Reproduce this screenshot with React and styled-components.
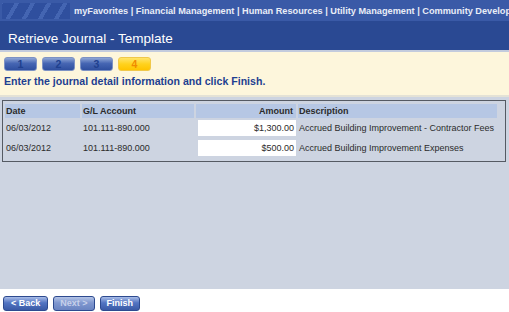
import React from 'react'
import styled, { createGlobalStyle } from 'styled-components'

const Global = createGlobalStyle`
    html, body { margin: 0; padding: 0; }
    body {
        font-family: "Liberation Sans", Arial, sans-serif;
        background: #ffffff;
        overflow: hidden;
    }
`

const Page = styled.div`
    width: 509px;
    height: 312px;
    display: flex;
    flex-direction: column;
`

const TopBar = styled.div`
    height: 21px;
    flex: 0 0 21px;
    background: #3a5aa7;
    display: flex;
    align-items: center;
    white-space: nowrap;
    overflow: hidden;
`

const Stripes = styled.div`
    flex: 0 0 68px;
    height: 16px;
    margin: 0 4px 0 2px;
    background: repeating-linear-gradient(
        -60deg,
        #2f4f9e 0px,
        #2f4f9e 10px,
        #4465b2 10px,
        #4465b2 14px
    );
`

const Menu = styled.div`
    color: #e9edf7;
    font-size: 9.2px;
    font-weight: bold;
`

const Header = styled.div`
    height: 31px;
    flex: 0 0 31px;
    background: #2a4993;
    border-bottom: 2px solid #c3cbdd;
    display: flex;
    align-items: flex-end;
    padding: 0 8px 4px;
    box-sizing: border-box;
    color: #ffffff;
    font-size: 13.5px;
`

const Band = styled.div`
    background: #fdf6dc;
    height: 45px;
    flex: 0 0 45px;
    padding: 5px 4px 0;
    box-sizing: border-box;
    border-bottom: 2px solid #e4e2d6;
`

const Steps = styled.div`
    display: flex;
    gap: 5px;
`

const Step = styled.div`
    width: 31px;
    height: 12px;
    border-radius: 3px;
    font-size: 10.5px;
    font-weight: bold;
    line-height: 13px;
    text-align: center;
    color: ${p => (p.$active ? '#f08a00' : '#20408e')};
    background: ${p =>
        p.$active
            ? 'linear-gradient(#ffe46a, #ffd21e 50%, #ffc400)'
            : 'linear-gradient(#8fa6d6, #4666b3 45%, #2f4f9f)'};
    border: 1px solid ${p => (p.$active ? '#f0c84a' : '#7d92c4')};
    overflow: hidden;
`

const Instruction = styled.div`
    margin-top: 4px;
    color: #1e3f91;
    font-size: 10.6px;
    font-weight: bold;
`

const Content = styled.div`
    flex: 1;
    background: #cdd4e1;
    padding: 3px 3px 0 2px;
`

const TableBox = styled.div`
    border: 1px solid #555a63;
    padding: 3px 8px 3px 2px;
`

const Grid = styled.div`
    display: grid;
    grid-template-columns: 75px 112px 100px 1fr;
    column-gap: 2px;
    font-size: 9px;
    color: #2b2b2b;
    white-space: nowrap;
`

const Head = styled.div`
    background: #b6c7e4;
    height: 14px;
    line-height: 14px;
    padding: 0 3px 0 1px;
    font-weight: bold;
    text-align: ${p => p.$align || 'left'};
`

const Cell = styled.div`
    height: 20px;
    display: flex;
    align-items: center;
    padding-left: 1px;
    justify-content: ${p => (p.$right ? 'flex-end' : 'flex-start')};
`

const AmountInput = styled.div`
    width: 98px;
    height: 16px;
    line-height: 16px;
    background: #ffffff;
    text-align: right;
    padding-right: 2px;
    box-sizing: border-box;
`

const Footer = styled.div`
    height: 23px;
    flex: 0 0 23px;
    display: flex;
    align-items: flex-start;
    gap: 5px;
    padding: 7px 3px 0;
    box-sizing: border-box;
`

const Button = styled.div`
    height: 13px;
    padding: 0 ${p => p.$pad || 6}px;
    border-radius: 3px;
    border: 1px solid #2d4a8f;
    background: ${p =>
        p.$disabled
            ? 'linear-gradient(#b4c4e6, #7f97cf 45%, #6a84c2)'
            : 'linear-gradient(#a9bde8, #5274c2 45%, #3a5aa6)'};
    color: ${p => (p.$disabled ? '#c7d1ea' : '#ffffff')};
    font-size: 9px;
    font-weight: bold;
    line-height: 13px;
`

const rows = [
    { date: '06/03/2012', acct: '101.111-890.000', amount: '$1,300.00', desc: 'Accrued Building Improvement - Contractor Fees' },
    { date: '06/03/2012', acct: '101.111-890.000', amount: '$500.00', desc: 'Accrued Building Improvement Expenses' },
]

export default function App() {
    return (
        <Page>
            <Global />
            <TopBar>
                <Stripes />
                <Menu>
                    myFavorites | Financial Management | Human Resources | Utility Management | Community Development
                </Menu>
            </TopBar>
            <Header>Retrieve Journal - Template</Header>
            <Band>
                <Steps>
                    <Step>1</Step>
                    <Step>2</Step>
                    <Step>3</Step>
                    <Step $active>4</Step>
                </Steps>
                <Instruction>Enter the journal detail information and click Finish.</Instruction>
            </Band>
            <Content>
                <TableBox>
                    <Grid>
                        <Head>Date</Head>
                        <Head>G/L Account</Head>
                        <Head $align="right">Amount</Head>
                        <Head>Description</Head>
                        {rows.map((r, i) => (
                            <React.Fragment key={i}>
                                <Cell>{r.date}</Cell>
                                <Cell>{r.acct}</Cell>
                                <Cell $right><AmountInput>{r.amount}</AmountInput></Cell>
                                <Cell>{r.desc}</Cell>
                            </React.Fragment>
                        ))}
                    </Grid>
                </TableBox>
            </Content>
            <Footer>
                <Button $pad={7}>&lt; Back</Button>
                <Button $pad={6} $disabled>Next &gt;</Button>
                <Button $pad={6}>Finish</Button>
            </Footer>
        </Page>
    )
}
